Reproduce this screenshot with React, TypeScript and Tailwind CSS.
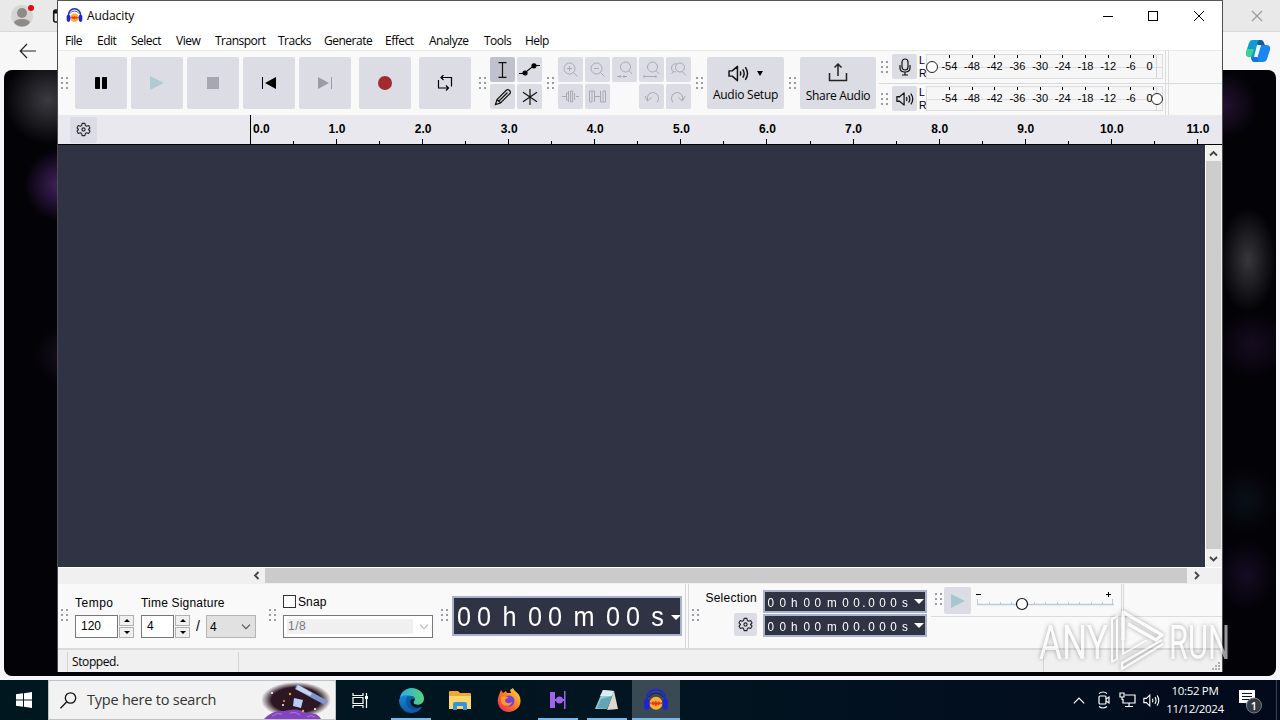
import type { ReactNode } from "react"

const ui = "font-['Open_Sans','Noto_Sans',sans-serif]"
const arial = "font-['Liberation_Sans',Arial,sans-serif]"

const Grip = ({ className = "" }: { className?: string }) => (
  <div className={`grid w-[7px] shrink-0 grid-cols-2 gap-[3px] ${className}`}>
    {[0, 1, 2, 3, 4, 5].map((i) => (
      <span key={i} className="size-[2px] bg-[#9a9ba3]" />
    ))}
  </div>
)

const Tile = ({ className = "", pressed, children }: { className?: string; pressed?: boolean; children?: ReactNode }) => (
  <div className={`flex shrink-0 items-center justify-center rounded-[2px] ${pressed ? "bg-[#bfc1cd]" : "bg-[#dcdde4]"} ${className}`}>
    {children}
  </div>
)

const GearIcon = () => (
  <svg width="15" height="15" viewBox="0 0 16 16" fill="none" stroke="#25262d" strokeWidth="1.2">
    <path d="M6.5 1.500h3l.5 2.300 1.300.7 2.200-.8 1.500 2.600L13.300 8l1.700 1.700-1.500 2.600-2.200-.8-1.300.8-.5 2.200h-3l-.5-2.200-1.300-.8-2.200.8L1 9.700 2.700 8 1 6.300l1.500-2.600 2.200.8L6 3.800z" strokeLinejoin="round" />
    <circle cx="8" cy="8" r="1.700" />
  </svg>
)

const SpeakerIcon = ({ size = 20 }: { size?: number }) => (
  <svg width={size} height={size} viewBox="0 0 20 20" fill="none" stroke="#111" strokeWidth="1.4">
    <path d="M1 7.500h3l5-4.300v13.600l-5-4.300H1z" strokeLinejoin="round" />
    <path d="M11.500 8q1.300 2 0 4M14 6q2.800 4 0 8M16.500 4q4.200 6 0 12" />
  </svg>
)

const AudacityIcon = ({ size }: { size: number }) => (
  <svg width={size} height={size} viewBox="0 0 24 24" fill="none">
    <path d="M3.500 15V11a8.500 8.500 0 0 1 17 0v4" stroke="#1f2bc4" strokeWidth="2.200" />
    <path d="M5.500 9.500a7 6 0 0 1 13 0" stroke="#1b1c70" strokeWidth="1" />
    <circle cx="12" cy="15" r="6" fill="#fbb03a" />
    <path d="M5.500 15l1.500-1 1 .5 1.200-1.500 1.300 1.500 1.300-2 1.500 2 1.300-1.500 1.300 1.500 1.200-.5 1.400 1-1.300 1-1.300-.5-1.300 1.500-1.300-1-1.400 2-1.400-2-1.300 1-1.200-1.500z" fill="#e8371a" />
    <rect x="1" y="11" width="5" height="10" rx="2.500" fill="#1c25d0" />
    <rect x="18" y="11" width="5" height="10" rx="2.500" fill="#1c25d0" />
  </svg>
)

/* ---------- browser behind the main window ---------- */

const Browser = () => (
  <div className="flex h-[680px] w-full flex-col bg-[#f4f6fb]">
    <div className="flex h-8 shrink-0 items-center justify-between border-b border-[#d8d8d8] bg-[#e9e9e9] pl-[11px] pr-4">
      <div className="flex items-center">
        <svg width="24" height="24" viewBox="0 0 24 24">
          <circle cx="11" cy="12" r="11" fill="#d7d5d3" />
          <circle cx="11" cy="9" r="5" fill="#8d8a87" />
          <path d="M3 18.500q1-3.500 8-3.500t8 3.500q-3 4-8 4t-8-4z" fill="#8d8a87" />
          <circle cx="20" cy="4" r="3" fill="#e30b13" />
        </svg>
        <svg className="ml-[17px]" width="14" height="14" viewBox="0 0 14 14" fill="none" stroke="#111" strokeWidth="1.5">
          <rect x="1.7" y="1" width="11" height="12" rx="2" />
          <path d="M2 3h10" strokeWidth="3" />
        </svg>
      </div>
      <svg width="14" height="14" viewBox="0 0 14 14" stroke="#9b9b9b" strokeWidth="1.2">
        <path d="M2 2l10 10M12 2L2 12" />
      </svg>
    </div>
    <div className="flex h-[38px] shrink-0 items-center justify-between bg-[#f7f7f7] pl-[19px] pr-[9px]">
      <svg width="18" height="16" viewBox="0 0 18 16" fill="none" stroke="#222" strokeWidth="1.2">
        <path d="M17 8H1.5M8 1L1.2 8 8 15" />
      </svg>
      <svg width="26" height="24" viewBox="0 0 26 24">
        <path d="M7 1h9q2 0 3 3l1 3h-6l-4 11H5q-5 0-4-5L4 4q1-3 3-3z" fill="#1499cf" />
        <path d="M2 10h7l-3 8q-6 0-5-5z" fill="#3bd197" />
        <path d="M14 1h2q2 0 3 3l1 3h-6l-2-3z" fill="#1559a3" />
        <path d="M16 6h5q5 0 4 5l-3 9q-1 3-4 3H9q-2 0-3-4h6z" fill="#1b86f0" />
        <path d="M12 6h4l-3.500 12H9z" fill="#e8f7fb" />
        <path d="M6 18h6l2 5H9q-2 0-3-5z" fill="#1a6fe0" />
      </svg>
    </div>
    <div className="mx-1 flex h-[606px] justify-between overflow-hidden rounded-lg bg-[#030207]">
      <div className="h-full w-[54px] bg-[radial-gradient(circle_at_44px_30px,#3c3b41_0,transparent_44px),radial-gradient(circle_at_56px_115px,#432260_0,transparent_36px),radial-gradient(circle_at_60px_285px,#17101e_0,transparent_30px)]" />
      <div className="h-full w-[54px] bg-[radial-gradient(34px_34px_at_2px_35px,#24122f_0,transparent_100%),radial-gradient(28px_52px_at_26px_190px,#38383b_0,transparent_100%),radial-gradient(34px_34px_at_30px_275px,#160c20_0,transparent_100%),radial-gradient(30px_34px_at_24px_430px,#0a1018_0,transparent_100%),radial-gradient(30px_36px_at_24px_505px,#150c22_0,transparent_100%)]" />
    </div>
  </div>
)

/* ---------- title and menu ---------- */

const TitleBar = () => (
  <div className="flex h-[31px] shrink-0 items-center bg-white pl-2 pr-[17px]">
    <AudacityIcon size={17} />
    <span className={`${ui} ml-1 grow text-[12px] leading-4 tracking-[-0.1px] text-black`}>Audacity</span>
    <svg width="104" height="12" viewBox="0 0 104 12" fill="none" stroke="#000" strokeWidth="1">
      <path d="M2 6.500h10" />
      <rect x="47.500" y="1.500" width="9" height="9" />
      <path d="M93 1l10 10M103 1L93 11" />
    </svg>
  </div>
)

const menus = [
  { label: "File", w: "w-8" },
  { label: "Edit", w: "w-[34px]" },
  { label: "Select", w: "w-[45px]" },
  { label: "View", w: "w-[39px]" },
  { label: "Transport", w: "w-[63px]" },
  { label: "Tracks", w: "w-[46px]" },
  { label: "Generate", w: "w-[61px]" },
  { label: "Effect", w: "w-11" },
  { label: "Analyze", w: "w-[55px]" },
  { label: "Tools", w: "w-[41px]" },
  { label: "Help", w: "w-[40px]" },
]

const MenuBar = () => (
  <div className={`${ui} flex h-[19px] shrink-0 items-center bg-white pl-[7px] text-[12px] tracking-[-0.5px] text-black`}>
    {menus.map((m) => (
      <span key={m.label} className={`${m.w} shrink-0 whitespace-nowrap`}>{m.label}</span>
    ))}
  </div>
)

/* ---------- upper toolbars ---------- */

const Transport = () => (
  <div className="ml-[7px] flex gap-1">
    <Tile className="size-[52px]">
      <svg width="12" height="12"><path d="M.5.5h4v11h-4zM7.500.5h4v11h-4z" stroke="#000" strokeLinejoin="round" /></svg>
    </Tile>
    <Tile className="size-[52px]">
      <svg width="14" height="14"><path d="M0 0l14 7-14 7z" fill="#b1cbd5" /></svg>
    </Tile>
    <Tile className="size-[52px]">
      <div className="size-3 bg-[#a6a7b1]" />
    </Tile>
    <Tile className="size-[52px]">
      <svg width="14" height="12"><path d="M.5 0v12" stroke="#000" /><path d="M14 0v12L3 6z" /></svg>
    </Tile>
    <Tile className="size-[52px]">
      <svg width="16" height="12"><path d="M14.500 0v12" stroke="#9b9ca6" /><path d="M1 0v12l11-6z" fill="#9b9ca6" /></svg>
    </Tile>
    <Tile className="ml-1 size-[52px]">
      <div className="size-[14px] rounded-full bg-[#a32b30]" />
    </Tile>
    <Tile className="ml-1 size-[52px]">
      <svg width="16" height="16" viewBox="0 0 16 16" fill="none" stroke="#000" strokeWidth="1.2">
        <path d="M1.500 5v8h9.500M4 2.500h10.500v9M6.500 0L4 2.500 6.500 5M9 10.500l2.500 2.500L9 15.500" />
      </svg>
    </Tile>
  </div>
)

const Tools = () => (
  <div className="ml-1 grid grid-cols-2 gap-[2px]">
    <Tile pressed className="size-[25px]">
      <svg width="9" height="16" fill="none" stroke="#111" strokeWidth="1.2"><path d="M.5 .6h8M.5 15.400h8M4.500 1v14" /></svg>
    </Tile>
    <Tile className="size-[25px]">
      <svg width="21" height="13" viewBox="0 0 21 13" stroke="#000" strokeWidth="1.200">
        <path d="M0 10.500h5L15 2.500h6" fill="none" />
        <circle cx="6" cy="10" r="2" /><circle cx="15" cy="2.800" r="2" />
      </svg>
    </Tile>
    <Tile className="size-[25px]">
      <svg width="18" height="18" viewBox="0 0 18 18" fill="none" stroke="#111" strokeWidth="1.200">
        <path d="M1.500 16.500l1.500-5L12.500 2q1.500-1 3 .5t.5 3L6.500 15zM3 11.500L6.500 15M5 13l8.500-8.500" />
      </svg>
    </Tile>
    <Tile className="size-[25px]">
      <svg width="16" height="16" viewBox="0 0 16 16" stroke="#111" strokeWidth="1.200"><path d="M8 0v16M1 3.200l14 9.600M15 3.200L1 12.800" /></svg>
    </Tile>
  </div>
)

const lens = "M15.500 15.500l-4-4M13 7.500a5.500 5.500 0 1 1-11 0 5.500 5.500 0 1 1 11 0"
const highLens = "M16 13l-3-3.500M14.500 6a5 5 0 1 1-10 0 5 5 0 1 1 10 0"

const editIcons: (string | null)[] = [
  `${lens}M5 7.500h5M7.500 5v5`,
  `${lens}M5 7.500h5`,
  `${highLens}M1 15.500h4M7 15.500h4M3.500 14L5 15.500 3.500 17M8.500 14L7 15.500 8.500 17`,
  `${highLens}M1 15.500h12M1 14v3M13 14v3`,
  "M16 14.500l-4-4M14.500 6.500a4.500 4.500 0 1 1-9 0 4.500 4.500 0 1 1 9 0M7 3q-5-1-5.500 4 0 4 4.500 4M4 10l-2.500 3",
  "M0 8.500h4M14 8.500h3M4.500 5v7h2V5zM8.500 3v11h2V3zM12.500 5v7M6.500 3v11",
  "M.5 3h2.500v11H.5zM5.500 3v11M3 3h2.500M5.500 8.500h6M11.500 3v11M14 3h2.500v11H14zM11.500 14H14",
  null,
  "M2 8l2.500 5 4-3.500M4.500 13q-1-8 5-8.500 6 .5 6 6 0 2-1.500 4",
  "M15 8l-2.500 5-4-3.500M12.500 13q1-8-5-8.500-6 .5-6 6 0 2 1.500 4",
]

const EditTools = () => (
  <div className="ml-1 grid grid-cols-5 gap-[2px]">
    {editIcons.map((d, i) =>
      d ? (
        <Tile key={i} className="size-[25px]">
          <svg width="17" height="18" viewBox="0 0 17 18" fill="none" stroke="#a8a9b5" strokeWidth="1"><path d={d} /></svg>
        </Tile>
      ) : (
        <span key={i} />
      )
    )}
  </div>
)

const levels = ["-54", "-48", "-42", "-36", "-30", "-24", "-18", "-12", "-6", "0"]

const Meter = ({ icon, knob }: { icon: ReactNode; knob: string }) => (
  <div className="flex h-[25px] items-center pl-[2px]">
    <Grip />
    <Tile className="ml-1 size-[25px]">{icon}</Tile>
    <div className={`${arial} ml-[2px] w-[7px] text-[10.5px] leading-[13px] text-black`}>
      <div>L</div>
      <div>R</div>
    </div>
    <div className="relative flex h-[25px] w-[237px] border border-[#dcdce0] bg-[#f6f6f7] pl-[11px]">
      <div className="absolute left-0 top-3 h-px w-full bg-[#dddde1]" />
      {levels.map((n) => (
        <div key={n} className={`${arial} relative flex w-[22.7px] shrink-0 flex-col items-center text-[11px] leading-[13px] text-black`}>
          <span className="h-[3px] w-px bg-black" />
          <span className={`mt-[2px] ${n === "0" ? "-translate-x-1" : ""}`}>{n}</span>
        </div>
      ))}
      <div className="absolute right-[5px] top-0 h-full w-px bg-[#d4d4da]" />
      <div className={`absolute top-[6px] size-3 rounded-full border border-[#222] bg-white ${knob}`} />
    </div>
  </div>
)

const MicIcon = () => (
  <svg width="14" height="18" viewBox="0 0 14 18" fill="none" stroke="#111" strokeWidth="1.200">
    <rect x="4" y="1" width="6" height="11" rx="3" />
    <path d="M2 7v3q0 4 5 4t5-4V7M7 14v3M4 17h6" />
  </svg>
)

const TopToolbar = () => (
  <div className="flex h-[65px] shrink-0 items-center border-t border-[#e8e8e8] bg-[#f9f9fa]">
    <Grip className="ml-[3px]" />
    <Transport />
    <Grip className="ml-2" />
    <Tools />
    <Grip className="ml-[5px]" />
    <EditTools />
    <Grip className="ml-[5px]" />
    <Tile className="ml-1 h-[52px] w-[77px] flex-col">
      <div className="flex items-center gap-2">
        <SpeakerIcon size={21} />
        <svg width="6" height="5"><path d="M0 0h6L3 5z" /></svg>
      </div>
      <span className={`${ui} mt-[3px] whitespace-nowrap text-[12px] leading-4 tracking-[-0.25px]`}>Audio Setup</span>
    </Tile>
    <Grip className="ml-[5px]" />
    <Tile className="ml-1 h-[52px] w-[76px] flex-col">
      <svg width="20" height="20" viewBox="0 0 20 20" fill="none" stroke="#222" strokeWidth="1.500">
        <path d="M1.500 11v7.500h17V11M10 14V2M6.500 5.500L10 2l3.500 3.500" />
      </svg>
      <span className={`${ui} mt-[6px] whitespace-nowrap text-[12px] leading-4 tracking-[-0.3px]`}>Share Audio</span>
    </Tile>
    <div className="ml-[3px] flex h-full grow flex-col">
      <div className="flex h-[33px] border-b border-[#d9d9dd]">
        <div className="pt-[3px]">
          <Meter icon={<MicIcon />} knob="left-[-1px]" />
        </div>
        <div className="ml-[2px] w-[4px] border-x border-[#dcdce0]" />
      </div>
      <div className="flex h-[31px]">
        <div className="pt-[2px]">
          <Meter icon={<SpeakerIcon size={18} />} knob="right-[-1px]" />
        </div>
        <div className="ml-[2px] w-[4px] border-x border-[#dcdce0]" />
      </div>
    </div>
  </div>
)

const Ruler = () => (
  <div className={`${arial} flex h-[30px] shrink-0 overflow-hidden border-b border-black bg-[#e8e8ee] text-[12px] font-bold text-black`}>
    <div className="flex w-[192px] shrink-0 items-center pl-3">
      <Tile className="h-[26px] w-[27px] pr-px">
        <GearIcon />
      </Tile>
    </div>
    <div className="w-[43px] shrink-0 border-l border-black pl-[2px] pt-[6px] leading-4">0.0</div>
    {Array.from({ length: 11 }, (_, i) => (
      <div key={i} className="flex w-[86.1px] shrink-0 flex-col items-center justify-between">
        <span className="pl-[2px] pt-[6px] leading-4 tracking-[0.1px]">{i + 1}.0</span>
        <div className="flex w-full items-end">
          <span className="h-[3px] w-px bg-black" />
          <span className="ml-[42px] h-[5px] w-px bg-black" />
        </div>
      </div>
    ))}
  </div>
)

/* ---------- track area ---------- */

const Chevron = ({ d }: { d: string }) => (
  <svg width="9" height="9" viewBox="0 0 9 9" fill="none" stroke="#444" strokeWidth="1.800"><path d={d} /></svg>
)

const Tracks = () => (
  <>
    <div className="flex h-[422px] shrink-0">
      <div className="grow bg-[#303344]" />
      <div className="flex w-[17px] flex-col items-center border-l border-white bg-[#f0f0f0] pr-px">
        <div className="flex h-4 items-center"><Chevron d="M1 6.500l3.500-3.500L8 6.500" /></div>
        <div className="w-[15px] grow bg-[#cdcdcd]" />
        <div className="flex h-[18px] items-center"><Chevron d="M1 3l3.500 3.500L8 3" /></div>
      </div>
    </div>
    <div className="flex h-[17px] shrink-0 items-center border-t border-white bg-[#f0f0f0] pb-px">
      <div className="flex w-[207px] justify-end pr-1"><Chevron d="M6.500 1L3 4.500 6.500 8" /></div>
      <div className="h-[15px] w-[922px] bg-[#cbcbcb]" />
      <div className="pl-[5px]"><Chevron d="M3 1l3.500 3.500L3 8" /></div>
    </div>
  </>
)

/* ---------- lower toolbars ---------- */

const Spinner = () => (
  <div className="ml-px flex h-[23px] w-[15px] flex-col gap-px">
    <div className="flex grow items-center justify-center border border-[#b0b0b0] bg-[#f0f0f0]">
      <svg width="6" height="3"><path d="M0 3h6L3 0z" /></svg>
    </div>
    <div className="flex grow items-center justify-center border border-[#b0b0b0] bg-[#f0f0f0]">
      <svg width="6" height="3"><path d="M0 0h6L3 3z" /></svg>
    </div>
  </div>
)

const SelectArrow = ({ color }: { color: string }) => (
  <svg width="10" height="6" fill="none" stroke={color} strokeWidth="1.200"><path d="M1 .7l4 4 4-4" /></svg>
)

const TimeSignature = () => (
  <div className="ml-[7px] flex pt-[11px]">
    <div className="w-[66px]">
      <div className="h-5 leading-4 tracking-[0.5px]">Tempo</div>
      <div className="flex">
        <div className="h-[23px] w-[43px] border border-[#777] bg-white pl-[5px] leading-[21px]">120</div>
        <Spinner />
      </div>
    </div>
    <div className="w-[115px]">
      <div className="h-5 whitespace-nowrap leading-4 tracking-[0.2px]">Time Signature</div>
      <div className="flex">
        <div className="h-[23px] w-[33px] border border-[#777] bg-white pl-[5px] leading-[21px]">4</div>
        <Spinner />
        <span className="w-[16px] text-center text-[14px] leading-[23px]">/</span>
        <div className="flex h-[23px] w-[50px] items-center justify-between border border-[#b4b4b4] bg-[#e1e1e1] pl-[3px] pr-1">
          4<SelectArrow color="#555" />
        </div>
      </div>
    </div>
  </div>
)

const Snap = () => (
  <div className="ml-[7px] w-[150px] pt-[10px]">
    <div className="flex h-[21px] items-start">
      <div className="mt-px size-[13px] border border-[#333] bg-white" />
      <span className="ml-[2px] leading-4 tracking-[0.1px]">Snap</span>
    </div>
    <div className="flex h-[23px] items-center border border-[#777] bg-white px-[3px] text-[#777]">
      <div className="h-[15px] w-[126px] bg-[#f0f0f0] pl-[1px] leading-[15px] tracking-[0.5px]">1/8</div>
      <div className="ml-[6px]"><SelectArrow color="#bbb" /></div>
    </div>
  </div>
)

const bigTime = [
  ["0", "w-5"], ["0", "w-5"], ["h", "w-[31px]"],
  ["0", "w-5"], ["0", "w-5"], ["m", "w-[38px]"],
  ["0", "w-5"], ["0", "w-5"], ["s", "w-[29px]"],
]

const smallTime = [
  ["0", "w-[11.5px]"], ["0", "w-[11.5px]"], ["h", "w-[12.5px]"],
  ["0", "w-[11.5px]"], ["0", "w-[11.5px]"], ["m", "w-4"],
  ["0", "w-[11px]"], ["0", "w-[11px]"], [".", "w-1"],
  ["0", "w-[11px]"], ["0", "w-[11px]"], ["0", "w-[11px]"], ["s", "w-3"],
]

const TimeField = () => (
  <div className="flex h-[23px] w-[164px] items-center border-2 border-[#a9b3cb] bg-[#303344] pt-[2px] text-[13px] text-white">
    {smallTime.map(([c, w], i) => (
      <span key={i} className={`${w} flex shrink-0 scale-x-90 justify-center`}>{c}</span>
    ))}
    <svg className="ml-[3px] mb-[2px] shrink-0" width="10" height="5"><path d="M0 0h10L5 5z" fill="#fff" /></svg>
  </div>
)

const PlaySpeed = () => (
  <div className="flex grow flex-col">
    <div className="flex h-[33px] border-b border-[#dcdce0] pl-1">
      <Grip className="mt-[9px] h-3" />
      <Tile className="ml-[2px] mt-[3px] size-[27px]">
        <svg width="14" height="14"><path d="M0 0l14 7-14 7z" fill="#a6c6d0" /></svg>
      </Tile>
      <svg className="ml-1" width="142" height="32" viewBox="975 584 142 32">
        <path d="M976 594.500h5M1106 594.500h5M1108.500 592v5" stroke="#000" />
        <path d="M977 604.500h137" stroke="#b7ced9" strokeWidth="1.500" />
        <path d="M977.500 599v5M989.500 602v2M1000.500 602v2M1011.500 602v2M1034.500 602v2M1045.500 602v2M1057.500 602v2M1068.500 602v2M1079.500 602v2M1091.500 602v2M1102.500 602v2M1112.500 599v5" stroke="#b7ced9" />
        <circle cx="1022" cy="604" r="5.500" fill="#fff" stroke="#111" strokeWidth="1.200" />
      </svg>
      <div className="ml-[4px] w-[3px] border-x border-[#d6d6da]" />
    </div>
  </div>
)

const BottomToolbar = () => (
  <div className={`${arial} flex h-[64px] shrink-0 bg-[#f9f9fa] text-[12px] text-black`}>
    <Grip className="ml-[3px] mt-[25px] h-3" />
    <TimeSignature />
    <Grip className="ml-[13px] mt-[25px] h-3" />
    <Snap />
    <Grip className="ml-2 mt-[25px] h-3" />
    <div className="ml-1 mt-3 flex h-10 w-[230px] items-center overflow-hidden border-2 border-[#a9b3cb] bg-[#303344] pt-[2px] text-[28px] leading-none text-white">
      {bigTime.map(([c, w], i) => (
        <span key={i} className={`${w} flex shrink-0 scale-x-90 justify-center`}>{c}</span>
      ))}
      <svg className="-ml-px shrink-0" width="10" height="5"><path d="M0 0h10L5 5z" fill="#fff" /></svg>
    </div>
    <div className="ml-[3px] w-1 border-x border-[#d6d6da]" />
    <Grip className="ml-[3px] mt-[25px] h-3" />
    <div className="ml-[6px] flex w-[52px] flex-col items-end pt-[6px]">
      <span className="leading-4 tracking-[0.25px]">Selection</span>
      <Tile className="mt-[7px] size-[23px]"><GearIcon /></Tile>
    </div>
    <div className="ml-[6px] mr-[4px] flex flex-col gap-px pt-[6px]">
      <TimeField />
      <TimeField />
    </div>
    <PlaySpeed />
  </div>
)

const StatusBar = () => (
  <div className={`${ui} flex h-6 shrink-0 border-t-2 border-[#dadada] bg-[#f0f0f0] pt-[2px] text-[12px] leading-[20px] text-black`}>
    <div className="w-[10px] border-r border-[#d4d4d4]" />
    <div className="w-[171px] border-r border-[#d4d4d4] pl-1 tracking-[-0.4px]">Stopped.</div>
    <div className="w-[805px] border-r border-[#d4d4d4]" />
    <div className="flex grow items-end justify-end p-[2px]">
      <svg width="8" height="8" fill="#b0b0b0"><path d="M6 0h2v2H6zM3 3h2v2H3zM6 3h2v2H6zM0 6h2v2H0zM3 6h2v2H3zM6 6h2v2H6z" /></svg>
    </div>
  </div>
)

/* ---------- taskbar ---------- */

const TaskButton = ({ children, open, active }: { children: ReactNode; open?: boolean; active?: boolean }) => (
  <div className={`flex h-10 w-12 shrink-0 flex-col items-center ${active ? "bg-[#3a4a54]" : ""}`}>
    <div className="flex h-[38px] items-center pt-[2px]">{children}</div>
    {(open || active) && <div className={`h-[2px] bg-[#76b9ed] ${active ? "w-12" : "w-10"}`} />}
  </div>
)

const Taskbar = () => (
  <div className={`${ui} flex h-10 w-full bg-linear-to-r from-[#00171f] via-[#021521] to-[#020a1c]`}>
    <div className="flex w-12 items-center justify-center">
      <svg width="16" height="16" fill="#fff"><path d="M0 2.300l7-1v6.200H0zM8 1.200L16 0v7.500H8zM0 8.500h7v6.200l-7-1zM8 8.500h8V16l-8-1.200z" /></svg>
    </div>
    <div className="flex w-[288px] items-center overflow-hidden border border-[#bfc2c4] bg-[#f2f2f2] pl-[11px]">
      <svg width="17" height="17" viewBox="0 0 17 17" fill="none" stroke="#111" strokeWidth="1.300">
        <circle cx="10.500" cy="6" r="5.200" /><path d="M6.800 9.800L.5 16.300" />
      </svg>
      <span className="ml-[10px] w-[175px] text-[14.500px] tracking-[-0.22px] text-[#333]">Type here to search</span>
      <svg width="70" height="38" viewBox="0 0 70 38">
        <defs>
          <radialGradient id="space"><stop offset="0.700" stopColor="#2d1722" /><stop offset="1" stopColor="#2d1722" stopOpacity="0" /></radialGradient>
        </defs>
        <ellipse cx="34" cy="19" rx="35" ry="18" fill="url(#space)" />
        <path d="M35 3l31 17-3 4-30-16z" fill="#7d97ce" />
        <path d="M36 4l14 8-2 3-14-7z" fill="#c9d5ef" />
        <path d="M32 17l9 2-2 8-8-2z" fill="#b9cdf5" />
        <path d="M2 38q8-9 20-8 14-4 22 2 12-1 15 6z" fill="#8444bd" />
        <path d="M10 35q6-4 10-2M28 32q6-2 10 2M45 36q4-3 8 0" stroke="#b078dc" fill="none" />
        <g fill="#fff"><circle cx="10" cy="12" r="1" /><circle cx="21" cy="24" r="1" /><circle cx="53" cy="28" r="1" /></g>
        <g fill="#ec9b45"><circle cx="28" cy="13" r="1.200" /><circle cx="41" cy="30" r="1.200" /><circle cx="22" cy="20" r="1" /></g>
      </svg>
    </div>
    <div className="flex w-[51px] items-center justify-center pl-px pr-1">
      <svg width="17" height="17" viewBox="0 0 17 17" fill="none" stroke="#fff" strokeWidth="1.200">
        <path d="M1 1v2.500h10V1M1 16v-2.500h10V16M1 5.500h10v6H1zM14.500 1v15" /><path d="M13 4h3v3h-3z" fill="#fff" stroke="none" />
      </svg>
    </div>
    <div className="flex gap-px">
      <TaskButton open>
        <svg width="25" height="25" viewBox="0 0 24 24">
          <defs>
            <linearGradient id="edgeTop"><stop stopColor="#2aa9e8" /><stop offset="1" stopColor="#58d37d" /></linearGradient>
            <linearGradient id="edgeLow" x2="0" y2="1"><stop stopColor="#1688d5" /><stop offset="1" stopColor="#0c59a4" /></linearGradient>
          </defs>
          <path d="M1 10C1 5 6 0 12 0c7 0 12 5 12 10 0 4-3 6-6 6-4 0-5-2-3-4 1-4-3-5-6-4C5 8 2 9 0 13z" fill="url(#edgeTop)" />
          <path d="M0 12C1 8 4 7 8 7c4-.3 7 2 7 4-1-1-3-1-4 1-1 4 3 8 8 7l3-1c-2 4-6 6-10 6C5 24 0 18 0 12z" fill="url(#edgeLow)" />
          <path d="M8 8C5 12 7 20 14 21c3 0 6-1 8-3-7 3-12-1-11-6 1-2 3-2 4-1-1-3-4-4-7-3z" fill="#0b3f87" opacity=".55" />
        </svg>
      </TaskButton>
      <TaskButton>
        <svg width="22" height="19" viewBox="0 0 22 19">
          <path d="M0 1q0-1 1-1h8l2 2h10q1 0 1 1v15H0z" fill="#f3a72b" />
          <path d="M0 5h22v13H0z" fill="#fbd66d" />
          <path d="M4 19v-6q0-2 2-2h10q2 0 2 2v6h-4v-4H8v4z" fill="#3693d8" />
        </svg>
      </TaskButton>
      <TaskButton>
        <svg width="24" height="24" viewBox="0 0 24 24">
          <defs><linearGradient id="fox" x1="1" x2="0" y2="1"><stop stopColor="#ffe23d" /><stop offset=".5" stopColor="#ff7826" /><stop offset="1" stopColor="#ec1a64" /></linearGradient></defs>
          <path d="M2 7l2-5 2 3 3-2 1 2 4 0-1-3 3-2c1 3 4 4 6 7 4 8 0 16-10 17C4 24-2 16 2 7z" fill="url(#fox)" />
          <circle cx="12" cy="13" r="5.500" fill="#7542d4" />
          <path d="M4 9q5-2 8 1-4 0-4 3 2 4 7 1c-1 5-9 5-11 0z" fill="#ff9a26" />
        </svg>
      </TaskButton>
      <TaskButton open>
        <svg width="16" height="18" viewBox="0 0 16 18" fill="#a362ed"><path d="M0 1h5v16H0zM14 0h1.500v18H14z" /><path d="M5 8h9v2H5z" /><circle cx="9.500" cy="9" r="3.500" /></svg>
      </TaskButton>
      <TaskButton open>
        <svg width="24" height="22" viewBox="0 0 24 22">
          <path d="M8 1l11 1-7 18H0z" fill="#91cbd8" /><path d="M8 1l11 1-2 5H5z" fill="#d9edf1" />
          <path d="M19 2l4 18-11 1z" fill="#dfd8ce" /><path d="M17 7l-5 13-10-1 4-9z" fill="#438e9e" opacity=".6" />
        </svg>
      </TaskButton>
      <TaskButton active><AudacityIcon size={26} /></TaskButton>
    </div>
    <div className="ml-auto flex items-center text-white">
      <svg width="12" height="7" fill="none" stroke="#fff" strokeWidth="1.200"><path d="M.8 6.300L6 1l5.200 5.300" /></svg>
      <svg className="ml-[12px]" width="14" height="18" viewBox="0 0 14 18" fill="none" stroke="#fff" strokeWidth="1.200">
        <rect x="2" y="5" width="7" height="8" rx="1" /><path d="M9 8l3-2v6l-3-2M2 2.500q4-3 8 0M2 15.500q4 3 8 0" />
      </svg>
      <svg className="ml-[8px]" width="17" height="16" viewBox="0 0 17 16" fill="none" stroke="#fff" strokeWidth="1.200">
        <path d="M6 3h10v8H4V7M10 11v3M6 14.500h8M1 1h4v4H1zM3 5v3" />
      </svg>
      <svg className="ml-[7px]" width="17" height="17" viewBox="0 0 20 20" fill="none" stroke="#fff" strokeWidth="1.300">
        <path d="M1 7.500h3l4-4v13l-4-4H1zM11 8q1.300 2 0 4M14 6q2.800 4 0 8M16.500 4q4.200 6 0 12" />
      </svg>
      <div className="ml-[6px] flex w-[58px] flex-col items-center whitespace-nowrap text-[11.500px] leading-[18px] tracking-[-0.35px]">
        <span>10:52 PM</span>
        <span>11/12/2024</span>
      </div>
      <svg className="ml-[14px] mr-[12px]" width="26" height="28" viewBox="0 0 26 28">
        <path d="M1 4h16v13h-5l-4 4v-4H1z" fill="#fff" />
        <path d="M4 7.500h10M4 10.500h10M4 13.500h7" stroke="#0a1224" />
        <circle cx="16" cy="19.500" r="7.500" fill="#353a44" stroke="#777d86" />
        <text x="16" y="23.500" textAnchor="middle" fontSize="11" fontWeight="600" fill="#fff">1</text>
      </svg>
      <div className="h-10 w-[4px] border-l border-[#3b4452]" />
    </div>
  </div>
)

const Watermark = () => (
  <svg className="absolute left-[1020px] top-[600px]" width="250" height="80" viewBox="1020 600 250 80">
    <g style={{ filter: "drop-shadow(0 0 2px rgba(60,60,60,.75))" }} opacity=".6">
      <g fill="#fff" fontFamily="Roboto, sans-serif" fontSize="49">
        <text transform="translate(1039 659) scale(.72 1)">ANY</text>
        <text transform="translate(1169 659) scale(.63 1)">RUN</text>
      </g>
      <g fill="none" stroke="#fff" strokeWidth="3.500" strokeLinejoin="round">
        <path d="M1123 640v-28l39 23-6 5-28-16" />
        <path d="M1118 616l-6 3v43l5-3v-40" strokeWidth="2" />
        <path d="M1162 640l-40 23v6l41-25" strokeWidth="2.500" />
        <path d="M1123 634v20l24-14" strokeWidth="2" />
      </g>
    </g>
  </svg>
)

const App = () => {
  return (
    <div className="relative h-[720px] w-[1280px] overflow-hidden">
      <Browser />
      <Taskbar />
      <div className="absolute left-[57px] top-0 flex h-[672px] w-[1166px] flex-col border-x border-t border-[#4b4b50] bg-[#f0f0f0]">
        <div className="-mt-px flex flex-col">
          <TitleBar />
          <MenuBar />
          <TopToolbar />
          <Ruler />
          <Tracks />
          <BottomToolbar />
          <StatusBar />
        </div>
      </div>
      <div className="absolute left-[57px] top-0 h-px w-[1166px] bg-[#55565a]" />
      <Watermark />
    </div>
  )
}

export default App
